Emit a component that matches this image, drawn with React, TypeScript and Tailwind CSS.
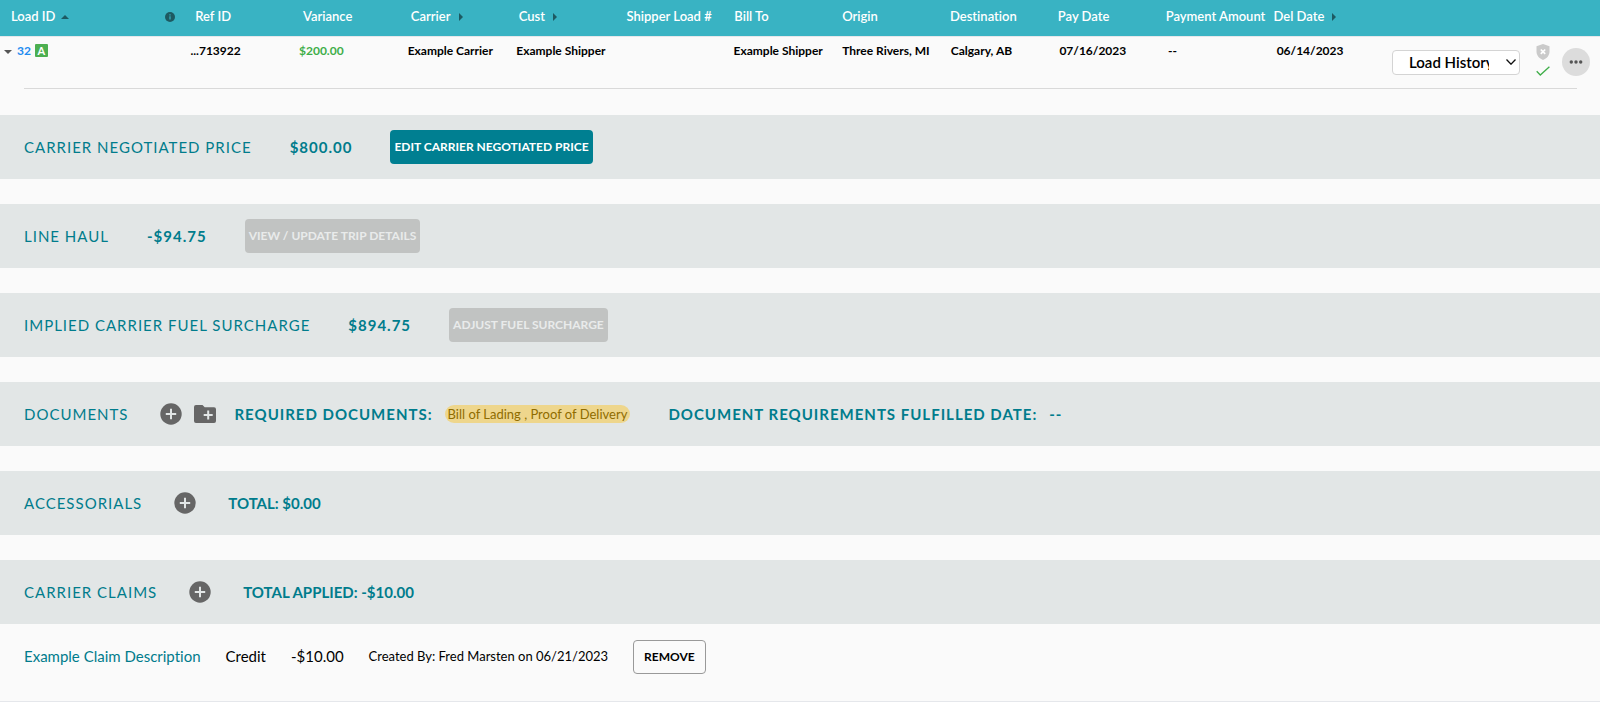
import React, { useState } from 'react';

const columns = [
  { label: 'Ref ID' },
  { label: 'Variance' },
  { label: 'Carrier', sortable: true },
  { label: 'Cust', sortable: true },
  { label: 'Shipper Load #' },
  { label: 'Bill To' },
  { label: 'Origin' },
  { label: 'Destination' },
  { label: 'Pay Date' },
  { label: 'Payment Amount' },
  { label: 'Del Date', sortable: true },
];

const load = [
  '...713922',
  '$200.00',
  'Example Carrier',
  'Example Shipper',
  '',
  'Example Shipper',
  'Three Rivers, MI',
  'Calgary, AB',
  '07/16/2023',
  '--',
  '06/14/2023',
];

function AddButton({ label }: { label: string }) {
  return (
    <button type="button" aria-label={label} className="shrink-0 text-[#666666]">
      <svg viewBox="0 0 22 22" className="w-[22px] h-[22px]" aria-hidden="true">
        <circle cx="11" cy="11" r="10.7" fill="currentColor" />
        <path d="M11 5.8v10.4M5.8 11h10.4" stroke="#e2e6e6" strokeWidth="2" />
      </svg>
    </button>
  );
}

function Section({ title, children }: { title: string; children: React.ReactNode }) {
  return (
    <section className="flex items-center h-16 px-6 bg-[#e2e6e6] text-[#007c8c] text-[15px] whitespace-nowrap">
      <h2 className="tracking-[1px]">{title}</h2>
      {children}
    </section>
  );
}

function Amount({ children }: { children: React.ReactNode }) {
  return <span className="ml-[38px] font-bold tracking-[1px]">{children}</span>;
}

function SectionButton({ children, disabled }: { children: React.ReactNode; disabled?: boolean }) {
  return (
    <button
      type="button"
      disabled={disabled}
      className="ml-[38px] h-[34px] px-1 rounded bg-[#007f91] text-white text-xs font-bold disabled:bg-[#c1c3c2] disabled:text-[#e9ebeb]"
    >
      {children}
    </button>
  );
}

function LoadTable() {
  const [view, setView] = useState('Load History');

  return (
    <table className="block w-full whitespace-nowrap">
      <thead className="block">
        <tr className="grid grid-cols-[12.2%_repeat(10,6.74%)_1fr] items-center h-9 pb-0.5 bg-[#39b3c3] text-white text-[13px] text-left">
          <th className="flex items-center justify-between pl-[11px] pr-5 font-semibold">
            <span className="flex items-center gap-[6px]">
              Load ID
              <svg viewBox="0 0 8 4" className="w-2 h-1" aria-hidden="true">
                <path d="M0 4l4-4 4 4z" fill="#1d5a62" />
              </svg>
            </span>
            <svg viewBox="0 0 10 10" className="w-[10px] h-[10px]" aria-hidden="true">
              <circle cx="5" cy="5" r="5" fill="#1d5a62" />
              <path d="M5 4.3v3.2M5 2.2v1.2" stroke="#39b3c3" strokeWidth="1.2" />
            </svg>
          </th>
          {columns.map((col) => (
            <th key={col.label} className="font-semibold">
              <span className="flex items-center gap-2">
                {col.label}
                {col.sortable && (
                  <svg viewBox="0 0 4 8" className="w-1 h-2" aria-hidden="true">
                    <path d="M0 0l4 4-4 4z" fill="#1d5a62" />
                  </svg>
                )}
              </span>
            </th>
          ))}
        </tr>
      </thead>
      <tbody className="block">
        <tr className="grid grid-cols-[11.9%_repeat(10,6.79%)_1fr_auto] h-[52px] pt-[6px] border-t border-gray-200 text-xs leading-4 font-bold text-black">
          <td className="flex items-start pl-1">
            <button type="button" aria-label="Collapse load" className="mt-[7px]">
              <svg viewBox="0 0 8 4" className="w-2 h-1" aria-hidden="true">
                <path d="M0 0h8l-4 4z" fill="#555" />
              </svg>
            </button>
            <a href="#load-32" className="ml-[5px] text-[#1e8cf0]">32</a>
            <span className="flex items-center justify-center ml-1 mt-px w-[13px] h-[13px] rounded-[1px] bg-[#4caf50] text-white text-[11px]">
              A
            </span>
          </td>
          {load.map((value, i) => (
            <td key={columns[i].label} className={value === '$200.00' ? 'text-[#3fae49]' : ''}>
              {value}
            </td>
          ))}
          <td className="flex items-start pr-[10px]">
            <div className="relative mt-[7px]">
              <select
                aria-label="Load view"
                value={view}
                onChange={(e) => setView(e.target.value)}
                className="block appearance-none w-32 h-[25px] pl-4 pr-[30px] pb-0.5 rounded border border-[#d4d4d4] bg-white text-[15px] font-semibold"
              >
                <option>Load History</option>
                <option>Load Details</option>
              </select>
              <svg
                viewBox="0 0 10 6"
                className="absolute right-1 top-[9px] w-[10px] h-[6px] pointer-events-none"
                aria-hidden="true"
              >
                <path d="M.5.5L5 5.2 9.5.5" fill="none" stroke="#111" strokeWidth="1.3" />
              </svg>
            </div>
            <div className="flex flex-col items-center gap-[6px] ml-4 mt-px w-[14px]">
              <svg viewBox="0 0 14 16" className="w-[14px] h-4" aria-hidden="true">
                <path d="M7 0l6.5 2.2v5.3c0 4-2.7 6.9-6.5 8.5C3.2 14.4.5 11.5.5 7.5V2.2z" fill="#cacaca" />
                <path d="M4.8 5.5l4.4 4.4M9.2 5.5L4.8 9.900" stroke="#fff" strokeWidth="1.7" />
              </svg>
              <svg viewBox="0 0 14 10" className="w-[14px] h-[10px]" aria-hidden="true">
                <path d="M.7 5.3l3.6 3.7L13.4.7" fill="none" stroke="#3fae49" strokeWidth="1.3" />
              </svg>
            </div>
            <button
              type="button"
              aria-label="More actions"
              className="flex items-center justify-center ml-3 mt-[5px] w-7 h-7 rounded-full bg-[#dcdcdc]"
            >
              <svg viewBox="0 0 14 4" className="w-[14px] h-1" fill="#555" aria-hidden="true">
                <circle cx="2.3" cy="2" r="1.7" />
                <circle cx="7" cy="2" r="1.7" />
                <circle cx="11.7" cy="2" r="1.7" />
              </svg>
            </button>
          </td>
        </tr>
      </tbody>
    </table>
  );
}

export default function App() {
  return (
    <main className="min-h-screen bg-[#fafafa] font-['Lato',sans-serif] [font-variant-ligatures:none]">
      <LoadTable />
      <hr className="ml-6 mr-[23px] border-[#d9d9d9]" />

      <div className="flex flex-col gap-[25px] mt-[26px]">
        <Section title="CARRIER NEGOTIATED PRICE">
          <Amount>$800.00</Amount>
          <SectionButton>EDIT CARRIER NEGOTIATED PRICE</SectionButton>
        </Section>

        <Section title="LINE HAUL">
          <Amount>-$94.75</Amount>
          <SectionButton disabled>VIEW / UPDATE TRIP DETAILS</SectionButton>
        </Section>

        <Section title="IMPLIED CARRIER FUEL SURCHARGE">
          <Amount>$894.75</Amount>
          <SectionButton disabled>ADJUST FUEL SURCHARGE</SectionButton>
        </Section>

        <Section title="DOCUMENTS">
          <div className="flex items-center gap-3 ml-8">
            <AddButton label="Add document" />
            <button type="button" aria-label="Add document folder" className="text-[#666666]">
              <svg viewBox="0 0 22 18" className="w-[22px] h-[18px]" aria-hidden="true">
                <path
                  d="M2 0h6.5l2.2 2.2H20a2 2 0 0 1 2 2V16a2 2 0 0 1-2 2H2a2 2 0 0 1-2-2V2a2 2 0 0 1 2-2z"
                  fill="currentColor"
                />
                <path d="M14.2 5.5v9M9.7 10h9" stroke="#e2e6e6" strokeWidth="2" />
              </svg>
            </button>
          </div>
          <strong className="ml-[18px] tracking-[1px]">REQUIRED DOCUMENTS:</strong>
          <span className="ml-3 px-[3px] rounded-full bg-[#eed68c] text-[#8f6c00] text-[13px] leading-[18px]">
            Bill of Lading , Proof of Delivery
          </span>
          <Amount>DOCUMENT REQUIREMENTS FULFILLED DATE:</Amount>
          <strong className="ml-3 tracking-[1px]">--</strong>
        </Section>

        <Section title="ACCESSORIALS">
          <div className="flex mx-8">
            <AddButton label="Add accessorial" />
          </div>
          <strong>TOTAL: $0.00</strong>
        </Section>

        <Section title="CARRIER CLAIMS">
          <div className="flex mx-8">
            <AddButton label="Add claim" />
          </div>
          <strong>TOTAL APPLIED: -$10.00</strong>
        </Section>
      </div>

      <div className="flex items-center gap-[25px] h-[78px] px-6 pb-3 border-b border-gray-200 text-[15px] text-black whitespace-nowrap">
        <a href="#claim" className="text-[#007c8c]">Example Claim Description</a>
        <span>Credit</span>
        <span>-$10.00</span>
        <span className="text-[13px]">Created By: Fred Marsten on 06/21/2023</span>
        <button type="button" className="h-[34px] px-[10px] rounded border border-[#999] text-xs font-bold">
          REMOVE
        </button>
      </div>
    </main>
  );
}
